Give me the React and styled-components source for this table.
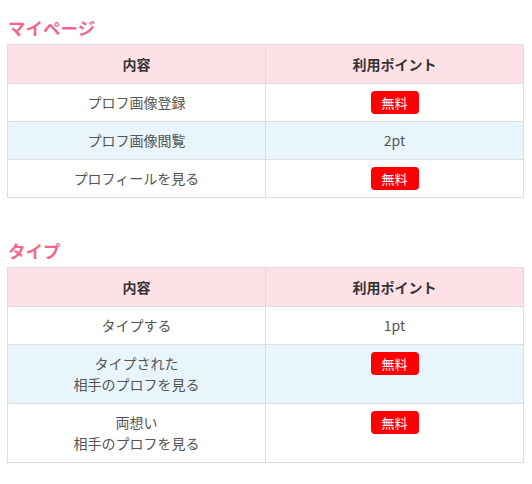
import styled, { createGlobalStyle } from "styled-components";

const GlobalStyle = createGlobalStyle`
  body {
    margin: 0;
    background: #fff;
    font-family: "Noto Sans CJK JP", "Noto Sans", sans-serif;
  }
`;

const Page = styled.div`
  padding: 15px 8px 20px 7px;
`;

const Section = styled.section`
  & + & {
    margin-top: 40px;
  }
`;

const Heading = styled.h2`
  margin: 0 0 3px 1px;
  font-size: 17.5px;
  line-height: 26px;
  font-weight: 700;
  color: #f4668a;
`;

const Table = styled.table`
  width: 100%;
  border-collapse: collapse;
  table-layout: fixed;
  font-size: 14px;
  color: #555;
`;

const Th = styled.th`
  padding: 9px 8px;
  line-height: 20px;
  background: #fde1e7;
  border: 1px solid #ddd;
  color: #333;
  font-weight: 700;
  text-align: center;
`;

const Row = styled.tr`
  background: ${(props) => (props.$tint ? "#e8f5fd" : "#fff")};
`;

const Td = styled.td`
  padding: 8px;
  line-height: 21px;
  border: 1px solid #ddd;
  text-align: center;
  vertical-align: top;
`;

const Badge = styled.span`
  display: inline-block;
  margin: -1px 0;
  width: 48px;
  height: 23px;
  line-height: 23px;
  border-radius: 4px;
  background: #ff0000;
  color: #fff;
  font-size: 13px;
  vertical-align: top;
`;

const sections = [
  {
    title: "マイページ",
    rows: [
      { label: ["プロフ画像登録"], free: true },
      { label: ["プロフ画像閲覧"], point: "2pt" },
      { label: ["プロフィールを見る"], free: true },
    ],
  },
  {
    title: "タイプ",
    rows: [
      { label: ["タイプする"], point: "1pt" },
      { label: ["タイプされた", "相手のプロフを見る"], free: true },
      { label: ["両想い", "相手のプロフを見る"], free: true },
    ],
  },
];

const App = () => {
  return (
    <>
      <GlobalStyle />
      <Page>
        {sections.map((section) => (
          <Section key={section.title}>
            <Heading>{section.title}</Heading>
            <Table>
              <thead>
                <tr>
                  <Th>内容</Th>
                  <Th>利用ポイント</Th>
                </tr>
              </thead>
              <tbody>
                {section.rows.map((row, i) => (
                  <Row key={i} $tint={i % 2 === 1}>
                    <Td>
                      {row.label.map((line, j) => (
                        <div key={j}>{line}</div>
                      ))}
                    </Td>
                    <Td>{row.free ? <Badge>無料</Badge> : row.point}</Td>
                  </Row>
                ))}
              </tbody>
            </Table>
          </Section>
        ))}
      </Page>
    </>
  );
};

export default App;
